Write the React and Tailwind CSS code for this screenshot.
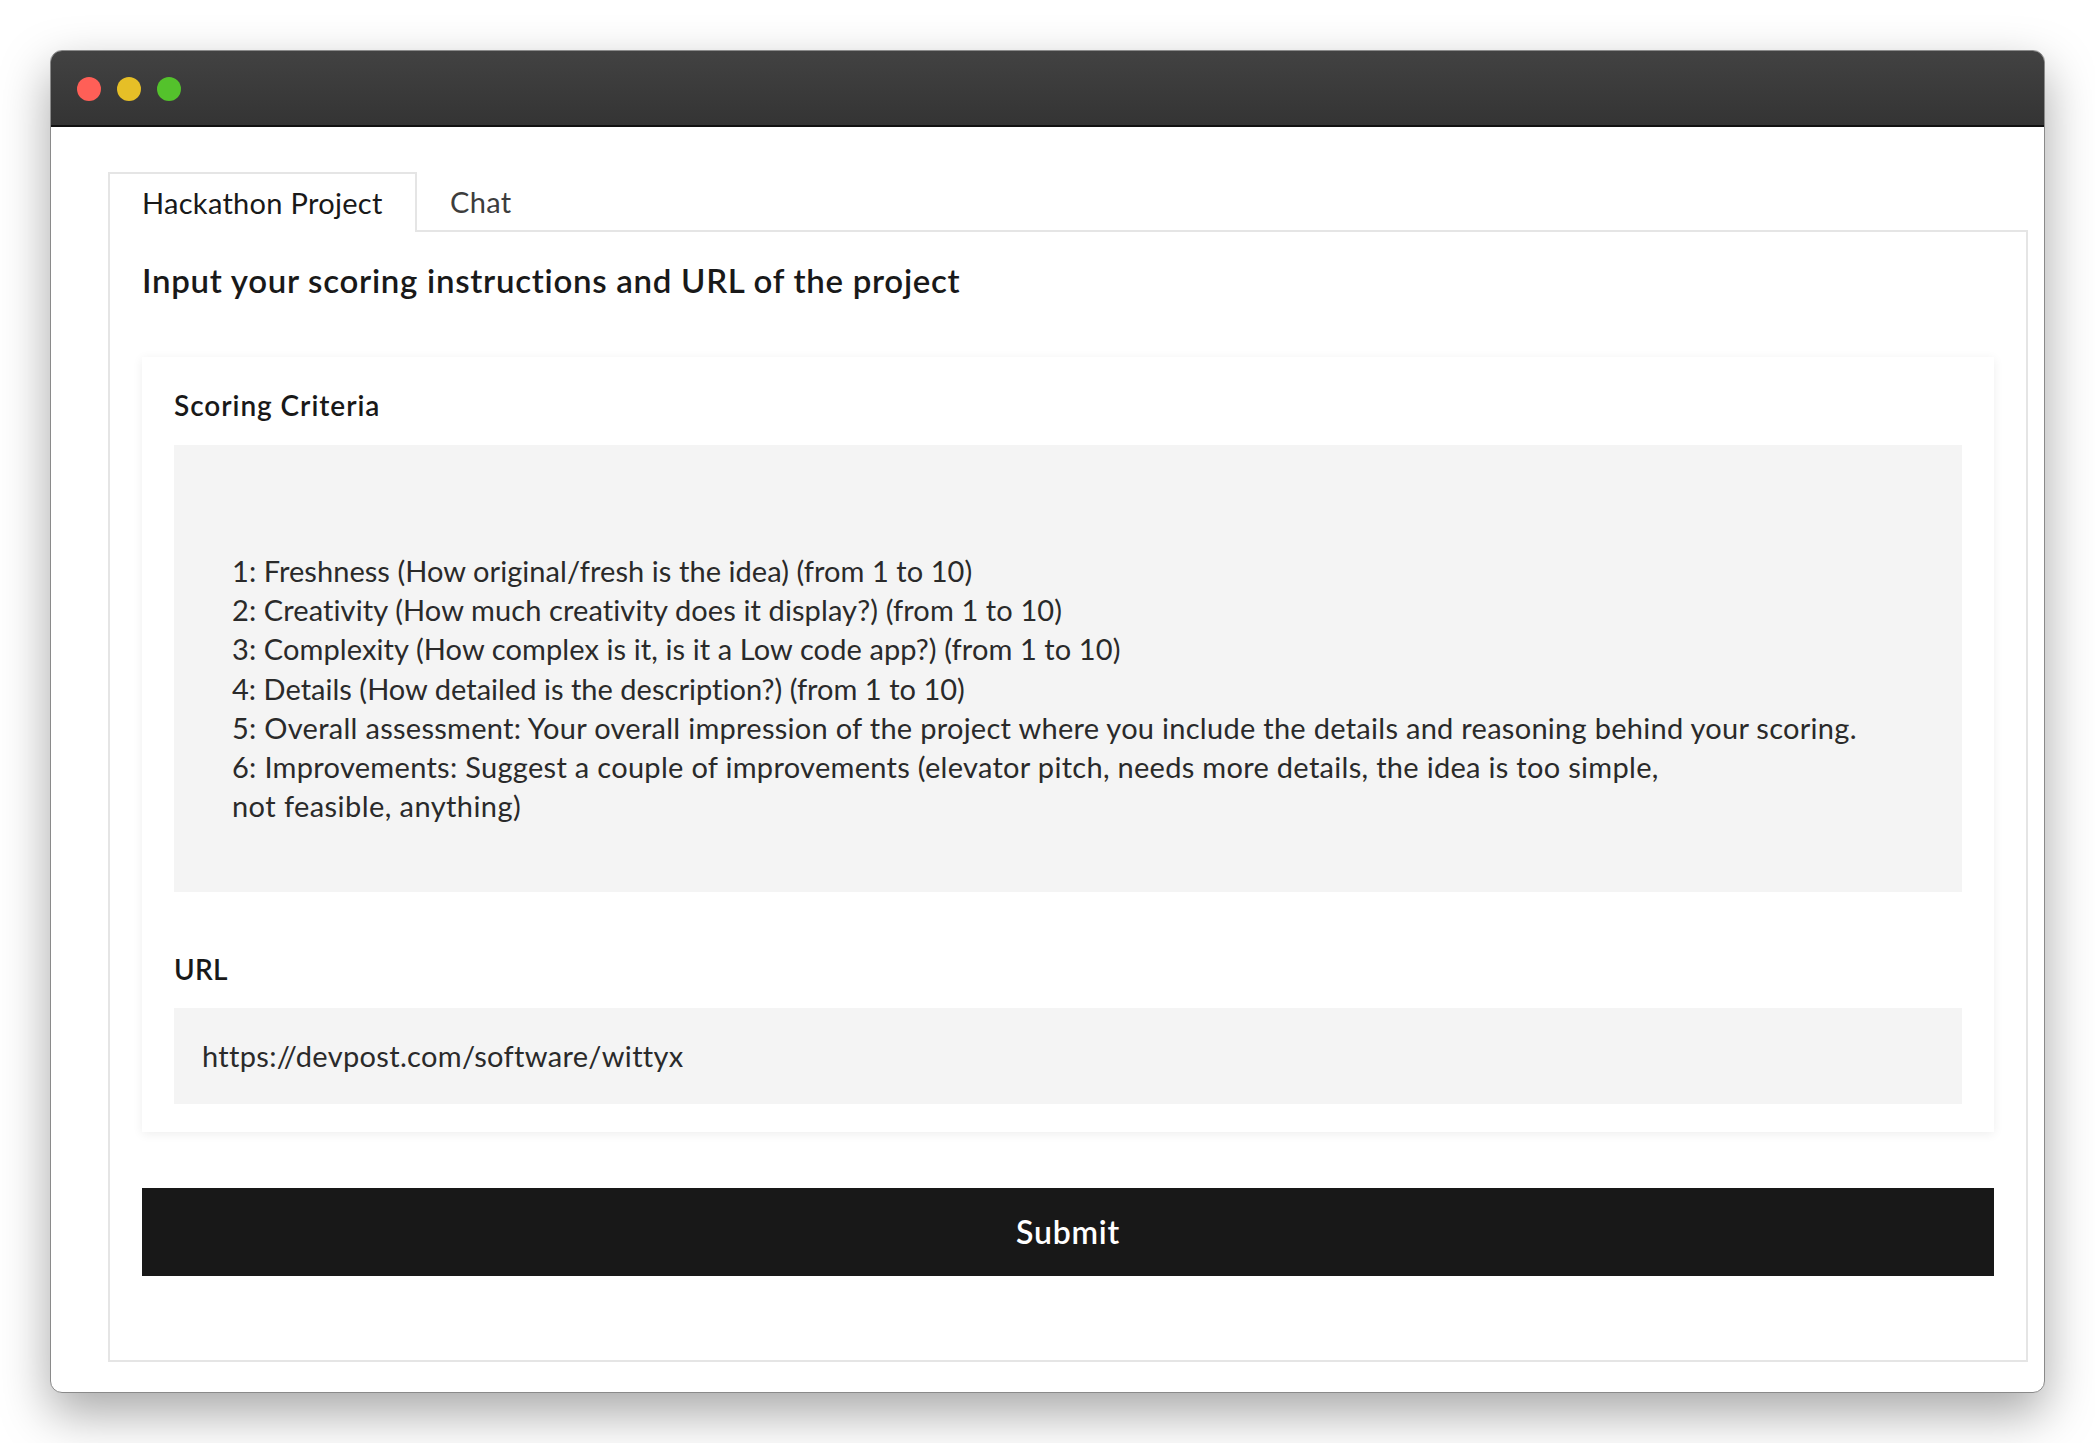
const criteria = [
  { text: '1: Freshness (How original/fresh is the idea) (from 1 to 10)', track: 'tracking-[0.06px]' },
  { text: '2: Creativity (How much creativity does it display?) (from 1 to 10)', track: 'tracking-[0.11px]' },
  { text: '3: Complexity (How complex is it, is it a Low code app?) (from 1 to 10)', track: 'tracking-[0.1px]' },
  { text: '4: Details (How detailed is the description?) (from 1 to 10)', track: 'tracking-[0.02px]' },
  { text: '5: Overall assessment: Your overall impression of the project where you include the details and reasoning behind your scoring.', track: 'tracking-[0.28px]' },
  { text: '6: Improvements: Suggest a couple of improvements (elevator pitch, needs more details, the idea is too simple,', track: 'tracking-[0.3px]' },
  { text: 'not feasible, anything)', track: 'tracking-[0.43px]' },
];

export default function App() {
  return (
    <div className="w-[2095px] h-[1443px] bg-white pt-[50px] pl-[50px] font-['Lato',sans-serif] text-[#191919] overflow-hidden">
      <div className="w-[1995px] h-[1343px] rounded-[12px] bg-white border border-[#8a8a8a] shadow-[0_20px_50px_rgba(0,0,0,0.35)] overflow-hidden flex flex-col">
        {/* title bar */}
        <div className="h-[77px] shrink-0 -mx-px -mt-px flex items-center gap-4 pt-[2px] pl-[27px] bg-gradient-to-b from-[#424242] to-[#343434] border-t border-t-[#6f6f6f] border-b-2 border-b-[#111111]">
          <span className="w-6 h-6 rounded-full bg-[#ff5f57]" />
          <span className="w-6 h-6 rounded-full bg-[#e6bf27]" />
          <span className="w-6 h-6 rounded-full bg-[#54c22c]" />
        </div>

        <div className="flex-1 flex flex-col pt-[45px] pl-[57px] pr-[16px] pb-[30px]">
          {/* tabs */}
          <div className="flex h-[60px] -mb-[2px] relative z-10 shrink-0">
            <div className="w-[309px] border-2 border-b-0 border-[#e5e5e5] bg-white pl-[32px] flex items-center text-[29px] tracking-[0.3px]">
              Hackathon Project
            </div>
            <div className="pl-[33px] flex items-center text-[29px] tracking-[0.3px] text-[#3d3d3d]">Chat</div>
          </div>

          <div className="flex-1 border-2 border-[#e5e5e5] px-[32px] flex flex-col">
            <h1 className="mt-[24px] h-[48px] leading-[48px] text-[33px] font-semibold tracking-[0.72px]">
              Input your scoring instructions and URL of the project
            </h1>

            <div className="mt-[53px] h-[775px] bg-white shadow-[0_2px_10px_rgba(0,0,0,0.07)] px-[32px] flex flex-col">
              <label className="mt-[30px] h-[36px] leading-[36px] text-[28px] font-semibold tracking-[0.95px]">Scoring Criteria</label>
              <div className="mt-[22px] h-[447px] bg-[#f4f4f4] pt-[106px] pl-[58px] text-[29px] leading-[39.2px] text-[#2a2a2a]">
                {criteria.map((line) => (
                  <div key={line.text} className={line.track}>{line.text}</div>
                ))}
              </div>
              <label className="mt-[59px] h-[36px] leading-[36px] text-[28px] font-semibold tracking-[0.2px]">URL</label>
              <div className="mt-[21px] h-[96px] bg-[#f4f4f4] pl-[28px] flex items-center text-[29px] tracking-[0.32px] text-[#2a2a2a]">
                https://devpost.com/software/wittyx
              </div>
            </div>

            <button className="mt-[56px] h-[88px] bg-[#181818] text-white text-[32px] font-semibold tracking-[0.75px]">Submit</button>
          </div>
        </div>
      </div>
    </div>
  );
}
